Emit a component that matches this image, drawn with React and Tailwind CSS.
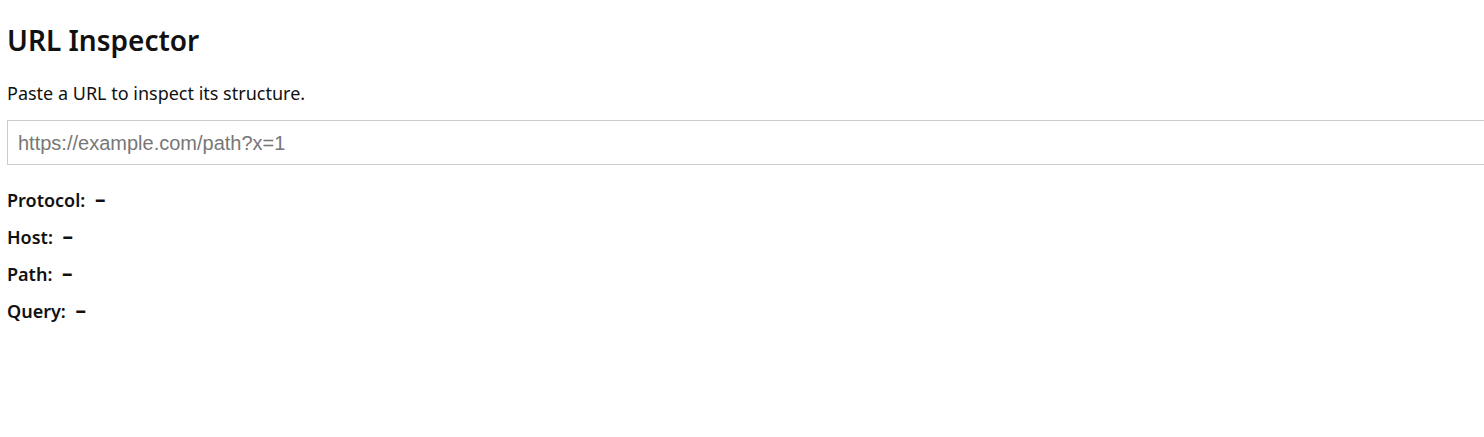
import React, { useState } from "react";

const FIELDS = ["Protocol", "Host", "Path", "Query"];

export default function App() {
  const [url, setUrl] = useState("");

  return (
    <div className="min-h-screen bg-white px-[7px] py-2 text-[#111] font-['Noto_Sans',sans-serif]">
      <h1 className="mt-[16px] text-[28px] leading-[32px] font-semibold">URL Inspector</h1>
      <p className="mt-[25px] text-[18px] leading-[24px]">Paste a URL to inspect its structure.</p>
      <input
        type="text"
        value={url}
        onChange={(e) => setUrl(e.target.value)}
        placeholder="https://example.com/path?x=1"
        className="mt-[15px] box-content block w-full h-[23px] border border-[#ccc] px-[10px] py-[10px] text-[20px] font-['Liberation_Sans',sans-serif] placeholder:text-[#777] outline-none"
      />
      <div className="mt-[23px] flex flex-col gap-[13px]">
        {FIELDS.map((f) => (
          <div key={f} className="h-[24px] text-[18px] leading-[24px] font-semibold">
            {f}: <span className="ml-[5px] font-bold text-[21px] leading-[0]">–</span>
          </div>
        ))}
      </div>
    </div>
  );
}
